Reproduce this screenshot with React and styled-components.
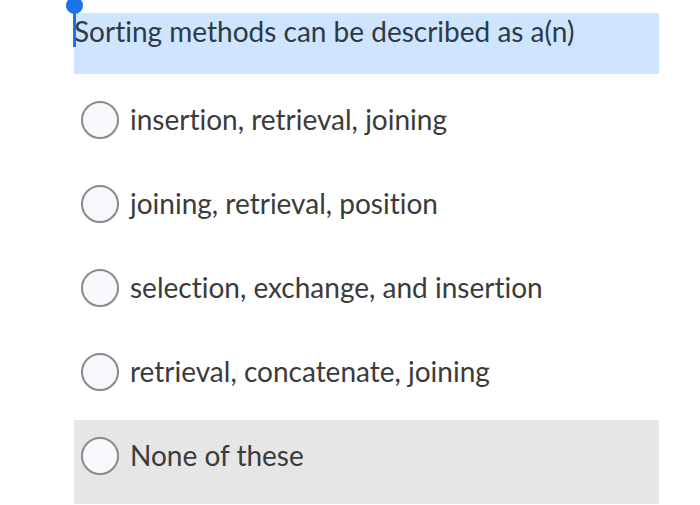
import styled, { createGlobalStyle } from 'styled-components'

const GlobalStyle = createGlobalStyle`
  body {
    margin: 0;
    background: #ffffff;
    font-family: Lato, "Open Sans", sans-serif;
    font-variant-ligatures: none;
  }
`

const Page = styled.div`
  width: 700px;
  height: 505px;
  overflow: hidden;
  padding: 13px 0 0 74px;
  box-sizing: border-box;
`

const Question = styled.div`
  position: relative;
  width: 585px;
  height: 61px;
  background: #cfe4ff;
  color: #2d3b45;
  font-size: 28px;
  line-height: 36px;
  box-sizing: border-box;
`

const Caret = styled.span`
  position: absolute;
  left: -1px;
  top: -4px;
  width: 3px;
  height: 38px;
  background: #1a73e8;

  &::before {
    content: '';
    position: absolute;
    left: -7px;
    top: -12px;
    width: 17px;
    height: 17px;
    border-radius: 50%;
    background: #1a73e8;
  }
`

const Options = styled.div`
  display: flex;
  flex-direction: column;
  margin-top: 10px;
`

const Option = styled.label`
  display: flex;
  align-items: flex-start;
  gap: 11px;
  width: 585px;
  height: 84px;
  padding: 17px 0 0 7px;
  box-sizing: border-box;
  background: ${(p) => (p.shaded ? '#e6e6e6' : 'transparent')};
  color: #3b3b3b;
  font-size: 28px;
  line-height: 36px;
`

const Radio = styled.span`
  flex: none;
  width: 38px;
  height: 38px;
  border-radius: 50%;
  border: 2px solid #8a8a8a;
  background: #f7f8fc;
  box-sizing: border-box;
`

const answers = [
  'insertion, retrieval, joining',
  'joining, retrieval, position',
  'selection, exchange, and insertion',
  'retrieval, concatenate, joining',
  'None of these',
]

const App = () => {
  return (
    <>
      <GlobalStyle />
      <Page>
        <Question>
          <Caret />
          Sorting methods can be described as a(n)
        </Question>
        <Options>
          {answers.map((a, i) => (
            <Option key={a} shaded={i === answers.length - 1}>
              <Radio />
              {a}
            </Option>
          ))}
        </Options>
      </Page>
    </>
  )
}

export default App
